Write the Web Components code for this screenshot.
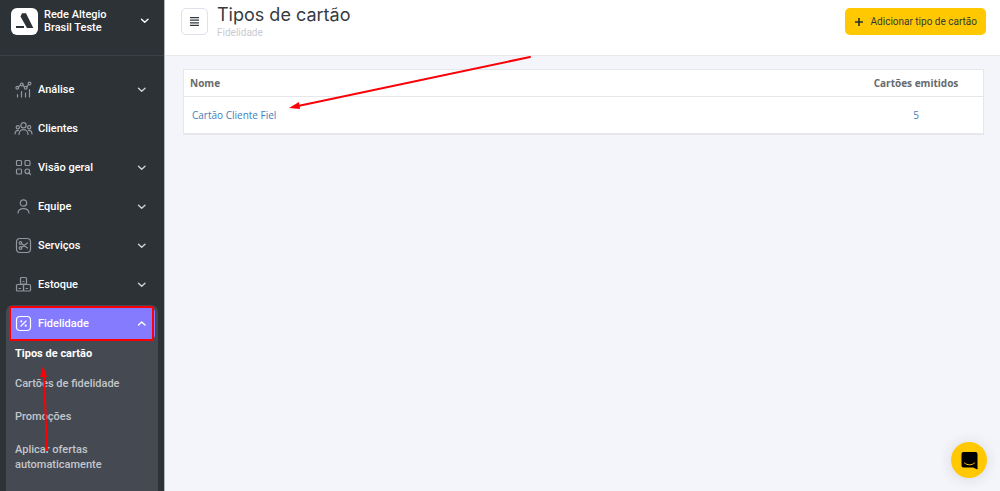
<!DOCTYPE html>
<html lang="pt-BR">
<head>
<meta charset="utf-8">
<meta name="viewport" content="width=device-width, initial-scale=1">
<title>Tipos de cartão</title>
<style>
  html, body { margin: 0; background: #f4f5fa; font-family: Inter, "Liberation Sans", sans-serif; }
</style>
</head>
<body>
<loyalty-app></loyalty-app>

<script>
const define = (name, html, setup) => {
  const template = document.createElement('template');
  template.innerHTML = html;
  customElements.define(name, class extends HTMLElement {
    constructor() {
      super();
      this.attachShadow({ mode: 'open' }).append(template.content.cloneNode(true));
    }
    connectedCallback() { if (setup) setup(this, this.shadowRoot); }
  });
};

const ICONS = {
  analytics: '<path d="M2.500 16v-2.500M6.500 16v-5.500M10.500 16v-4M14.500 16V8.500M3.200 5.800 5.500 4.300M8 4.300 9.500 6M11.800 5.800 13.500 3.500"/><circle cx="2.300" cy="6.800" r="1.400"/><circle cx="6.800" cy="3.500" r="1.400"/><circle cx="10.700" cy="6.800" r="1.400"/><circle cx="14.500" cy="2.500" r="1.400"/>',
  clients: '<circle cx="8.500" cy="5.200" r="2.600"/><path d="M4 14.500c0-6.500 9-6.500 9 0"/><circle cx="2.800" cy="7.200" r="1.600"/><circle cx="14.200" cy="7.200" r="1.600"/><path d="M0 14c0-2.500 1-3.700 3.500-3.700M17 14c0-2.500-1-3.700-3.500-3.700"/>',
  overview: '<rect x="1.500" y="1.500" width="5" height="5" rx="1"/><rect x="10" y="1.500" width="5" height="5" rx="1"/><rect x="1.500" y="10" width="5" height="5" rx="1"/><circle cx="12.300" cy="12.300" r="2.300"/><path d="m14 14 1.500 1.500"/>',
  team: '<circle cx="8.500" cy="5" r="3.200"/><path d="M3 15c.3-2.700 2.400-4.300 5.500-4.300S13.700 12.300 14 15"/>',
  services: '<rect x="1.500" y="1.500" width="14" height="14" rx="3.500"/><circle cx="5.500" cy="6" r="1.300"/><circle cx="5.500" cy="11" r="1.300"/><path d="m6.700 6.700 5.800 4.300M6.700 10.300 12.500 6"/>',
  stock: '<rect x="5.500" y="1.500" width="6" height="6.500" rx="1"/><rect x="1.500" y="8.500" width="7" height="6.500" rx="1"/><rect x="8.500" y="8.500" width="7" height="6.500" rx="1"/><path d="M8 5.500h1M4 12.500h1.500M11 12.500h1.500"/>',
  loyalty: '<rect x="1.500" y="1.500" width="14" height="14" rx="3.500"/><path d="m11 6-5 5"/><circle cx="6.300" cy="6.300" r=".5"/><circle cx="10.700" cy="10.700" r=".5"/>',
  down: '<path stroke-width="1.400" d="m5.500 7.300 3.200 3L12 7.300"/>',
  up: '<path stroke-width="1.400" d="m5.500 10 3.200-3L12 10"/>'
};

define('ui-icon', `
  <style>
    :host { display: block; flex: none; width: 17px; height: 17px; }
    svg { display: block; overflow: visible; fill: none; stroke: currentColor; stroke-width: 1.200; stroke-linecap: round; stroke-linejoin: round; }
  </style>
  <svg width="17" height="17" viewBox="0 0 17 17" aria-hidden="true"></svg>
`, (el, root) => { root.querySelector('svg').innerHTML = ICONS[el.getAttribute('name')] || ''; });

define('account-switcher', `
  <style>
    :host { display: block; border-bottom: 1px solid #3b4146; }
    button { display: flex; align-items: flex-start; width: 100%; height: 55px; box-sizing: border-box; padding: 8px 11px; border: 0; background: none; color: #fff; font: 500 11px/13px Roboto, sans-serif; text-align: left; }
    svg { flex: none; display: block; margin-right: 6px; }
    span { flex: 1; }
    ui-icon { margin-top: 4px; }
  </style>
  <button type="button">
    <svg width="27" height="27" viewBox="0 0 27 27" aria-hidden="true"><rect width="27" height="27" rx="6" fill="#fff"/><path fill="#2d3236" d="M11 5.300h4L22.300 20H16L9.500 8.500zM5 18h8v2H5z"/></svg>
    <span><slot></slot></span>
    <ui-icon name="down"></ui-icon>
  </button>
`);

define('nav-item', `
  <style>
    :host { display: block; }
    button { display: flex; align-items: center; width: 100%; height: 39px; padding: 0 14px 0 15px; border: 0; background: none; color: #fff; font: 500 11px/15px Roboto, sans-serif; text-align: left; }
    .icon { color: #92969e; margin-right: 6px; }
    span { flex: 1; }
    .chevron { color: #d0d3d6; }
    :host([active]) button { height: 33px; padding: 0 5px 0 6px; border-radius: 5px; background: #857bff; }
    :host([active]) .icon, :host([active]) .chevron { color: #fff; }
  </style>
  <button type="button"><span><slot></slot></span></button>
`, (el, root) => {
  const icon = (kind, name) => {
    const node = document.createElement('ui-icon');
    node.className = kind;
    node.setAttribute('name', name);
    return node;
  };
  const button = root.querySelector('button');
  button.prepend(icon('icon', el.getAttribute('icon')));
  if (!el.hasAttribute('single')) button.append(icon('chevron', el.hasAttribute('active') ? 'up' : 'down'));
});

define('nav-link', `
  <style>
    :host { display: block; }
    a { display: block; padding: 9px 6px; color: #c3c6cb; font: 500 11px/15px Roboto, sans-serif; text-decoration: none; }
    :host([current]) a { padding: 6px; color: #fff; font-weight: 700; }
  </style>
  <a href="#"><slot></slot></a>
`);

define('side-nav', `
  <style>
    :host { display: flex; flex-direction: column; background: #2d3236; border-right: 1px solid #b4b7ba; }
    nav { flex: 1; display: flex; flex-direction: column; padding-top: 14px; }
    .group { position: relative; flex: 1; margin: 1px 6px 0 6px; padding: 2px 3px 0 3px; border-radius: 7px 7px 0 0; background: #454951; }
    .frame { position: absolute; left: 3px; right: 4px; top: 1px; height: 35px; box-sizing: border-box; border: 2px solid #fb0007; border-radius: 2px; pointer-events: none; }
    .arrow { position: absolute; left: 30px; top: 61px; pointer-events: none; }
  </style>
  <account-switcher>Rede Altegio<br>Brasil Teste</account-switcher>
  <nav aria-label="Principal">
    <nav-item icon="analytics">Análise</nav-item>
    <nav-item icon="clients" single>Clientes</nav-item>
    <nav-item icon="overview">Visão geral</nav-item>
    <nav-item icon="team">Equipe</nav-item>
    <nav-item icon="services">Serviços</nav-item>
    <nav-item icon="stock">Estoque</nav-item>
    <div class="group">
      <nav-item icon="loyalty" active>Fidelidade</nav-item>
      <nav-link current>Tipos de cartão</nav-link>
      <nav-link>Cartões de fidelidade</nav-link>
      <nav-link>Promoções</nav-link>
      <nav-link>Aplicar ofertas automaticamente</nav-link>
      <div class="frame"></div>
      <svg class="arrow" width="16" height="86" viewBox="0 0 16 86" aria-hidden="true"><path d="m8 9 3 76" stroke="#fb0007" stroke-width="2"/><path d="M7 0 11 11H4z" fill="#fb0007"/></svg>
    </div>
  </nav>
`);

define('page-header', `
  <style>
    :host { display: flex; align-items: flex-start; height: 55px; padding: 0 14px 0 16px; background: #fff; border-bottom: 1px solid #e9eaed; }
    button { box-sizing: border-box; height: 27px; margin-top: 8px; border-radius: 5px; }
    .menu { display: grid; place-items: center; width: 27px; padding: 0; border: 1px solid #dfe0ea; background: #fff; }
    .titles { flex: 1; margin-left: 9px; }
    h1 { margin: 3px 0 0; color: #363b40; font: 400 18px/24px Inter, sans-serif; }
    p { margin: 0; color: #c8cbd3; font: 400 10px/12px Roboto, sans-serif; }
    .add { display: flex; align-items: center; gap: 7px; padding: 0 9px; border: 0; background: #ffc800; color: #333b38; font: 400 10px/15px Roboto, sans-serif; }
  </style>
  <button class="menu" type="button" aria-label="Menu"><svg width="9" height="9" viewBox="0 0 9 9" stroke="#33383c" stroke-width="1.300"><path d="M0 .7h9M0 3.200h9M0 5.800h9M0 8.300h9"/></svg></button>
  <div class="titles"><h1>Tipos de cartão</h1><p>Fidelidade</p></div>
  <button class="add" type="button"><svg width="10" height="10" viewBox="0 0 10 10" stroke="#292f2e" stroke-width="1.600" aria-hidden="true"><path d="M5 1v8M1 5h8"/></svg>Adicionar tipo de cartão</button>
`);

define('card-table', `
  <style>
    :host { display: block; margin: 13px 16px 0 18px; }
    table { width: 100%; border-collapse: collapse; background: #fff; border: 1px solid #e6e7ea; border-bottom-width: 2px; color: #676a6c; font: 400 10px/14px "Open Sans", sans-serif; }
    th { padding: 6px; border-bottom: 1px solid #e6e7ea; font-weight: 700; text-align: left; }
    td { padding: 11px 8px; }
    th:last-child, td:last-child { width: 122px; padding-left: 6px; padding-right: 6px; text-align: center; }
    a { color: #4080bc; text-decoration: none; }
  </style>
  <table>
    <thead><tr><th scope="col">Nome</th><th scope="col">Cartões emitidos</th></tr></thead>
    <tbody><tr><td><a href="#">Cartão Cliente Fiel</a></td><td><a href="#">5</a></td></tr></tbody>
  </table>
`);

define('chat-button', `
  <style>
    :host { position: fixed; right: 13px; bottom: 13px; }
    button { display: grid; place-items: center; width: 36px; height: 36px; padding: 0; border: 0; border-radius: 50%; background: #ffc800; box-shadow: 0 1px 14px rgba(40, 45, 70, .14); }
  </style>
  <button type="button" aria-label="Abrir chat"><svg width="17" height="19" viewBox="0 0 17 19" aria-hidden="true"><path d="M2.500 1h12a2 2 0 0 1 2 2v15.500L12 16.500H2.500a2 2 0 0 1-2-2V3a2 2 0 0 1 2-2z"/><path d="M3.500 12c3 2.500 7 2.500 10 0" fill="none" stroke="#ffc800" stroke-linecap="round"/></svg></button>
`);

define('loyalty-app', `
  <style>
    :host { display: grid; grid-template-columns: 165px 1fr; min-height: 100vh; }
    main { position: relative; min-width: 0; }
    .arrow { position: absolute; left: 124px; top: 56px; pointer-events: none; }
  </style>
  <side-nav></side-nav>
  <main>
    <page-header></page-header>
    <card-table></card-table>
    <svg class="arrow" width="244" height="56" viewBox="0 0 244 56" aria-hidden="true"><path d="M241 1 9 50" stroke="#fb0007" stroke-width="2" stroke-linecap="round"/><path d="m0 52 10-6 1 7z" fill="#fb0007"/></svg>
  </main>
  <chat-button></chat-button>
`);
</script>
</body>
</html>
